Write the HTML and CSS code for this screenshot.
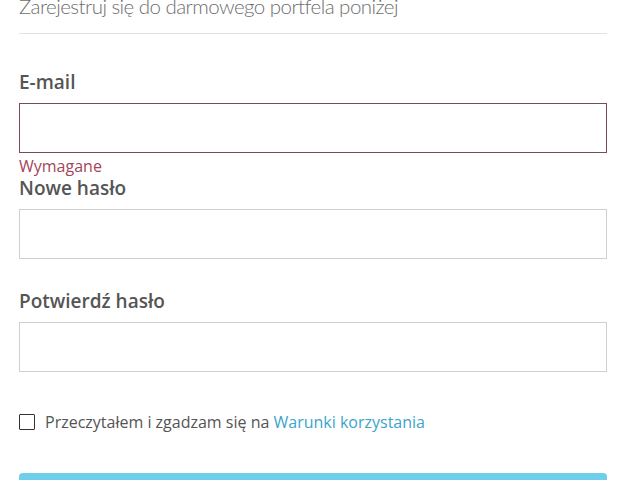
FILE: index.html
```html
<!DOCTYPE html>
<html lang="pl">
<head>
<meta charset="utf-8">
<link rel="stylesheet" href="styles.css">
</head>
<body>
<div class="page">
  <p class="intro">Zarejestruj się do darmowego portfela poniżej</p>
  <form class="form">
    <div class="field">
      <label class="label">E-mail</label>
      <div class="input input-error"></div>
      <div class="error">Wymagane</div>
    </div>
    <div class="field">
      <label class="label">Nowe hasło</label>
      <div class="input"></div>
    </div>
    <div class="field field-gap">
      <label class="label">Potwierdź hasło</label>
      <div class="input"></div>
    </div>
    <div class="terms">
      <span class="checkbox"></span>
      <span class="terms-text">Przeczytałem i zgadzam się na <a class="link">Warunki korzystania</a></span>
    </div>
    <div class="button"></div>
  </form>
</div>
</body>
</html>
```
FILE: styles.css
```css
html, body {
  margin: 0;
  padding: 0;
  background: #fff;
}
.page {
  padding: 0 17px 0 19px;
  overflow: hidden;
  height: 480px;
}
.intro {
  margin: -7px 0 0;
  padding-bottom: 14px;
  font-family: "Lato", sans-serif;
  font-weight: 300;
  font-size: 20.5px;
  letter-spacing: -0.55px;
  line-height: 26px;
  color: #6e6e6e;
  border-bottom: 1px solid #e2e2e2;
}
.form {
  display: flex;
  flex-direction: column;
  padding-top: 36px;
}
.field {
  display: flex;
  flex-direction: column;
}
.field-gap {
  margin-top: 30px;
}
.label {
  font-family: "Open Sans", sans-serif;
  font-weight: 600;
  font-size: 19px;
  line-height: 24px;
  color: #555;
  margin-bottom: 9px;
}
.input {
  height: 48px;
  border: 1px solid #cfcfcf;
  background: #fff;
}
.input-error {
  border-color: #7b4b56;
}
.error {
  font-family: "Open Sans", sans-serif;
  font-size: 16px;
  line-height: 20px;
  color: #a2465a;
  margin-top: 3px;
}
.terms {
  display: flex;
  align-items: center;
  gap: 10px;
  margin-top: 40px;
}
.checkbox {
  width: 14px;
  height: 14px;
  border: 1px solid #333;
  border-radius: 1px;
}
.terms-text {
  font-family: "Open Sans", sans-serif;
  font-size: 16px;
  line-height: 20px;
  color: #555;
}
.link {
  color: #3ba4cc;
}
.button {
  margin-top: 41px;
  height: 40px;
  background: #6fcfea;
  border-radius: 4px;
}
```
